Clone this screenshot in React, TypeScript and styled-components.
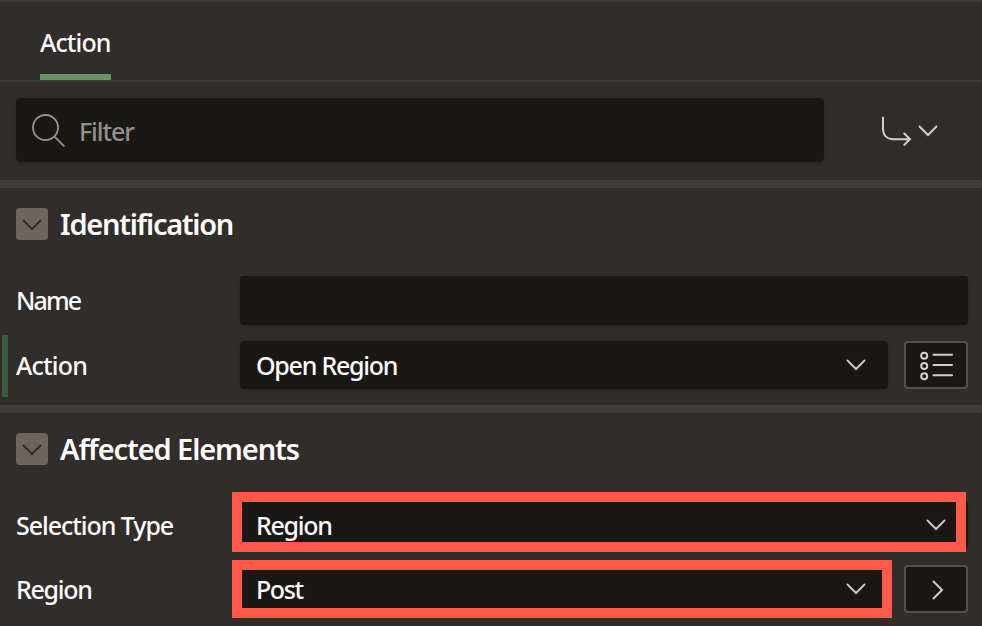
import React from "react";
import styled, { createGlobalStyle } from "styled-components";

const GlobalStyle = createGlobalStyle`
  * { box-sizing: border-box; }
  body { margin: 0; background: #312d2a; overflow: hidden; }
`;

const Panel = styled.main`
  display: flex;
  flex-direction: column;
  width: 982px;
  height: 626px;
  overflow: hidden;
  background: #312d2a;
  color: #fcfbfa;
  font-family: "Noto Sans", "Open Sans", sans-serif;
  font-size: 25px;
  font-weight: 500;
  line-height: 34px;

  > * { flex-shrink: 0; }
`;

const TabBar = styled.nav`
  display: flex;
  height: 82px;
  padding-left: 40px;
  border-top: 2px solid #403b38;
  border-bottom: 2px solid #403b38;
`;

const Tab = styled.div`
  width: 71px;
  height: 78px;
  padding-top: 23px;
  border-bottom: 6px solid #6b9264;
`;

const Text = styled.span<{ $tracking?: number }>`
  display: block;
  white-space: nowrap;
  letter-spacing: ${(p) => p.$tracking ?? -0.9}px;
`;

const Toolbar = styled.div`
  display: flex;
  height: 98px;
  padding: 16px 44px 0 16px;
  justify-content: space-between;
`;

const FilterBox = styled.div`
  display: flex;
  align-items: center;
  width: 808px;
  height: 64px;
  padding: 1px 0 0 16px;
  gap: 14px;
  border-radius: 4px;
  background: #191815;
  color: #92908e;
  box-shadow: 0 1px 3px rgba(0, 0, 0, 0.15);
`;

const MenuButton = styled.div`
  display: flex;
  align-items: center;
  height: 66px;
  gap: 7px;
`;

const Section = styled.section`
  border-top: 8px solid #403b38;
`;

const SectionHeader = styled.header`
  display: flex;
  align-items: center;
  height: 72px;
  padding-left: 16px;
  gap: 12px;
`;

const Toggle = styled.div`
  display: flex;
  align-items: center;
  justify-content: center;
  width: 32px;
  height: 32px;
  padding-top: 2px;
  border-radius: 4px;
  background: #6a655f;
`;

const Heading = styled.h2<{ $tracking: number }>`
  margin: 0;
  font-size: 29px;
  line-height: 40px;
  font-weight: 600;
  white-space: nowrap;
  letter-spacing: ${(p) => p.$tracking}px;
`;

const Rows = styled.div`
  display: flex;
  flex-direction: column;
  gap: 16px;
  padding: 16px 14px 16px 0;
`;

const Row = styled.div<{ $height?: number }>`
  position: relative;
  display: grid;
  grid-template-columns: 224px 1fr auto;
  align-items: center;
  height: ${(p) => p.$height ?? 48}px;
  padding-left: 16px;
`;

const ChangedMark = styled.i`
  position: absolute;
  left: 2px;
  top: -6px;
  width: 6px;
  height: 62px;
  background: #3a5a43;
`;

const Label = styled(Text)`
  padding-bottom: 1px;
`;

const Field = styled.div`
  position: relative;
  display: flex;
  align-items: center;
  justify-content: space-between;
  height: 100%;
  padding: 0 22px 0 16px;
  border-radius: 4px;
  background: #191815;
  box-shadow: 0 1px 3px rgba(0, 0, 0, 0.18);
`;

const Highlight = styled.b<{ $right: number; $top: number; $bottom: number }>`
  position: absolute;
  left: -8px;
  right: ${(p) => p.$right}px;
  top: ${(p) => p.$top}px;
  bottom: ${(p) => p.$bottom}px;
  border: 10px solid #ff5a4a;
`;

const IconButton = styled.div`
  display: flex;
  align-items: center;
  justify-content: center;
  width: 64px;
  height: 48px;
  margin-left: 16px;
  padding: 1px 0 0 1px;
  border: 2px solid #55504b;
  border-radius: 4px;
  background: #191815;
`;

const ChevronDown = ({ color = "#c9c7c4" }: { color?: string }) => (
  <svg width="20" height="12" viewBox="0 0 20 12" fill="none" stroke={color} strokeWidth="2" strokeLinecap="round">
    <path d="M1.5 1.5 10 10l8.5-8.5" />
  </svg>
);

const ChevronRight = () => (
  <svg width="14" height="20" viewBox="0 0 14 20" fill="none" stroke="#d2d0cd" strokeWidth="2" strokeLinecap="round">
    <path d="M3.5 1.5 12 10l-8.5 8.5" />
  </svg>
);

const SearchIcon = () => (
  <svg width="33" height="34" viewBox="0 0 33 34" fill="none" stroke="#92908e" strokeWidth="1.9">
    <circle cx="13.5" cy="13.5" r="12.5" />
    <path d="m22.3 22.3 10 10" />
  </svg>
);

const GoToIcon = () => (
  <svg width="30" height="31" viewBox="0 0 30 31" fill="none" stroke="#d2d0cd" strokeWidth="2" strokeLinecap="round">
    <path d="M2 1.5v11.2c0 6.5 4 10.5 10.5 10.5h16M23.3 17.5l5.7 5.7-5.7 5.7" />
  </svg>
);

const ListIcon = () => (
  <svg width="34" height="30" viewBox="0 0 34 30" fill="none" stroke="#d2d0cd" strokeWidth="2" strokeLinecap="round">
    {[4.7, 15, 25.2].map((y) => (
      <g key={y}>
        <circle cx="4.2" cy={y} r="3" />
        <path d={`M13.5 ${y - 1}h18.5`} />
      </g>
    ))}
  </svg>
);

const SectionTitle = ({ title, tracking }: { title: string; tracking: number }) => (
  <SectionHeader>
    <Toggle>
      <ChevronDown color="#312d2a" />
    </Toggle>
    <Heading $tracking={tracking}>{title}</Heading>
  </SectionHeader>
);

export default function App() {
  return (
    <>
      <GlobalStyle />
      <Panel>
        <TabBar>
          <Tab>
            <Text>Action</Text>
          </Tab>
        </TabBar>
        <Toolbar>
          <FilterBox>
            <SearchIcon />
            <Text $tracking={-1.1}>Filter</Text>
          </FilterBox>
          <MenuButton>
            <GoToIcon />
            <ChevronDown color="#d2d0cd" />
          </MenuButton>
        </Toolbar>
        <Section>
          <SectionTitle title="Identification" tracking={-1.3} />
          <Rows>
            <Row $height={49}>
              <Label $tracking={-1.9}>Name</Label>
              <Field />
            </Row>
            <Row>
              <ChangedMark />
              <Label $tracking={-0.8}>Action</Label>
              <Field>
                <Text $tracking={-1.25}>Open Region</Text>
                <ChevronDown />
              </Field>
              <IconButton>
                <ListIcon />
              </IconButton>
            </Row>
          </Rows>
        </Section>
        <Section>
          <SectionTitle title="Affected Elements" tracking={-1.1} />
          <Rows>
            <Row>
              <Label $tracking={-1.05}>Selection Type</Label>
              <Field>
                <Text $tracking={-1.3}>Region</Text>
                <ChevronDown />
                <Highlight $right={2} $top={-9} $bottom={-3} />
              </Field>
            </Row>
            <Row>
              <Label $tracking={-1.3}>Region</Label>
              <Field>
                <Text $tracking={-1.4}>Post</Text>
                <ChevronDown />
                <Highlight $right={-4} $top={-5} $bottom={-5} />
              </Field>
              <IconButton>
                <ChevronRight />
              </IconButton>
            </Row>
          </Rows>
        </Section>
      </Panel>
    </>
  );
}
